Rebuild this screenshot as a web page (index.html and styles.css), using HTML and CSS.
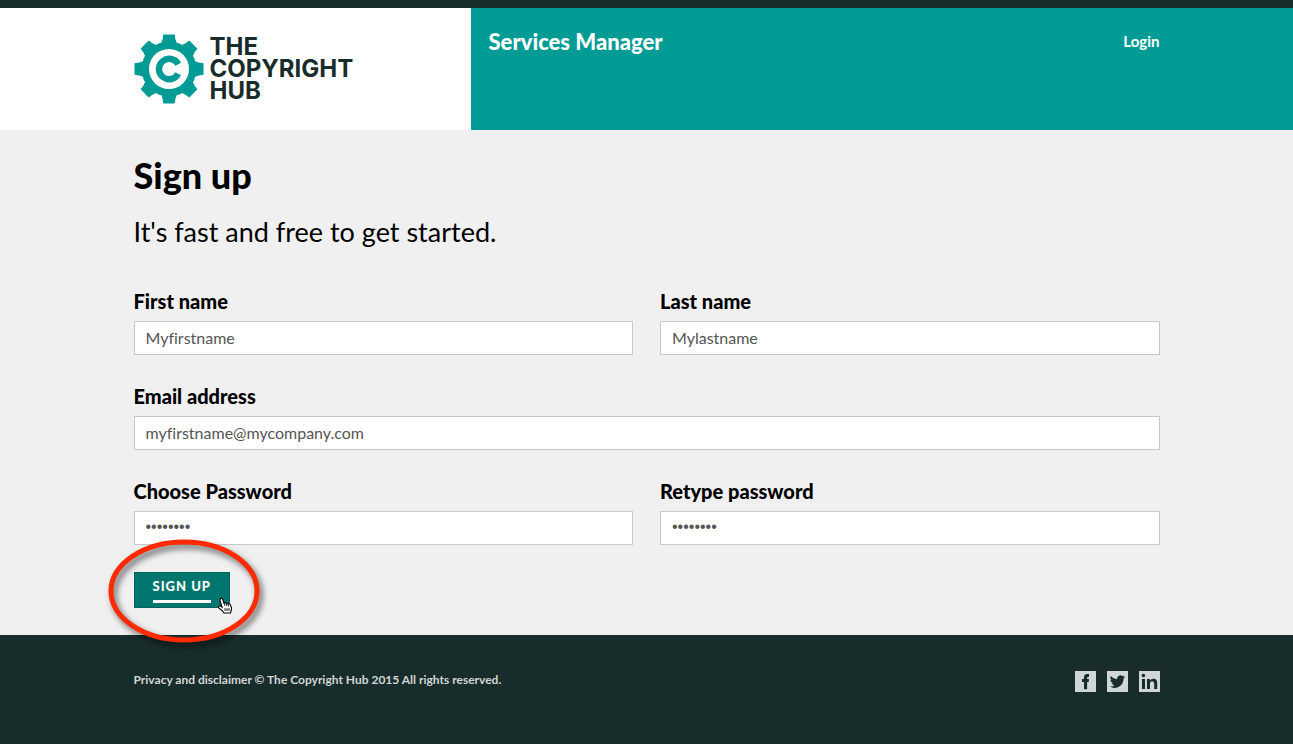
FILE: index.html
```html
<!DOCTYPE html>
<html lang="en">
<head>
<meta charset="utf-8">
<meta name="viewport" content="width=device-width, initial-scale=1">
<title>Sign up - The Copyright Hub</title>
<link rel="stylesheet" href="styles.css">
</head>
<body>
<header class="header">
  <a class="brand" href="#">
    <svg class="brand-mark" viewBox="-35 -35 70 70" aria-hidden="true">
      <defs><path id="tooth" d="M-8-23L-7.2-28Q-6.2-29-6-33.5Q-5.8-34.5-5-34.5H5Q5.8-34.5 6-33.5Q6.2-29 7.2-28L8-23Z"/></defs>
      <g fill="#009b95">
        <circle r="27.5"/>
        <use href="#tooth"/>
        <use href="#tooth" transform="rotate(45)"/>
        <use href="#tooth" transform="rotate(90)"/>
        <use href="#tooth" transform="rotate(135)"/>
        <use href="#tooth" transform="rotate(180)"/>
        <use href="#tooth" transform="rotate(225)"/>
        <use href="#tooth" transform="rotate(270)"/>
        <use href="#tooth" transform="rotate(315)"/>
      </g>
      <circle r="20" fill="#fff"/>
      <path d="M9.2-4.8A10.2 10.2 0 1 0 9.2 4.8" fill="none" stroke="#009b95" stroke-width="6.4"/>
    </svg>
    <span class="brand-name">THE<br>COPYRIGHT<br>HUB</span>
  </a>
  <div class="masthead">
    <span class="service">Services Manager</span>
    <a class="login" href="#">Login</a>
  </div>
</header>
<main class="main">
  <h1 class="title">Sign up</h1>
  <p class="lead">It's fast and free to get started.</p>
  <form class="form">
    <div class="field">
      <label class="label" for="first">First name</label>
      <input class="input" id="first" type="text" value="Myfirstname">
    </div>
    <div class="field">
      <label class="label" for="last">Last name</label>
      <input class="input" id="last" type="text" value="Mylastname">
    </div>
    <div class="field field-wide">
      <label class="label" for="email">Email address</label>
      <input class="input" id="email" type="email" value="myfirstname@mycompany.com">
    </div>
    <div class="field">
      <label class="label" for="pass">Choose Password</label>
      <input class="input password" id="pass" type="password" value="password">
    </div>
    <div class="field">
      <label class="label" for="pass2">Retype password</label>
      <input class="input password" id="pass2" type="password" value="password">
    </div>
  </form>
  <div class="action">
    <button class="button" type="button"><span class="button-text">SIGN UP</span></button>
    <svg class="highlight" viewBox="0 0 170 120" aria-hidden="true">
      <ellipse cx="85" cy="60" rx="73" ry="49" fill="none" stroke="#ff2a00" stroke-width="5"/>
    </svg>
    <svg class="pointer" viewBox="0 0 16 17" aria-hidden="true">
      <path d="M3.500 1.500Q4.500 .500 5.500 2L7 6Q8 5 9 6.200Q10 5.600 11 6.900Q12.500 6.300 13.300 7.800L14.500 11Q14.800 12.500 13.500 16H7Q5.500 13.500 2.200 11.300Q.800 9.800 2 9Q3.300 8.700 5 10L3 3.500Q2.700 2.300 3.500 1.500Z" fill="#fff" stroke="#000" stroke-width="1.100"/>
      <path d="M7 6L7.800 8.800M9 6.400L9.800 9M11 7L11.600 9.400M8 11.200V14M10 11.200V14M12 11V14" fill="none" stroke="#000" stroke-width=".900"/>
    </svg>
  </div>
</main>
<footer class="footer">
  <small class="legal">Privacy and disclaimer © The Copyright Hub 2015 All rights reserved.</small>
  <nav class="social" aria-label="Social">
    <a class="social-link" href="#" aria-label="Facebook"><svg class="social-icon" viewBox="0 0 21 21"><path d="M9 18.200V10.900H7V8H9V6.300Q9 3 12.200 3H14V5.900H12.900Q12.100 5.900 12.100 6.800V8H14L13.700 10.900H12.100V18.200Z"/></svg></a>
    <a class="social-link" href="#" aria-label="Twitter"><svg class="social-icon" viewBox="0 0 21 21"><path d="M18 5.700Q17.300 6.100 16.300 6.300Q17.300 5.600 17.700 4.500Q16.700 5.100 15.600 5.300A3.300 3.300 0 0 0 10.100 8.300Q6.200 8.100 3.700 5Q2.500 7.500 4.700 9.200Q4 9.200 3.300 8.800Q3.400 11.200 5.900 12.100Q5.200 12.300 4.500 12.100Q5.200 14.100 7.500 14.300Q5.500 15.800 3 15.600Q5 16.900 7.500 16.900C13.500 16.900 16.700 12 16.500 7.500Q17.400 6.800 18 5.700Z"/></svg></a>
    <a class="social-link" href="#" aria-label="LinkedIn"><svg class="social-icon" viewBox="0 0 21 21"><circle cx="4.400" cy="4.500" r="1.800"/><path d="M3 8H6V18H3ZM8 8H10.900V9.400Q12 7.700 14.200 7.700C17.500 7.700 18.200 9.800 18.200 12.300V18H15.200V13Q15.200 10.300 13.200 10.300Q11 10.300 11 13V18H8Z"/></svg></a>
  </nav>
</footer>
</body>
</html>
```
FILE: styles.css
```css
:root {
  --gutter: max(24px, calc(50vw - 513px));
  --dark: #182d2b;
  --teal: #009b95;
}

* {
  box-sizing: border-box;
}

body {
  display: flex;
  flex-direction: column;
  min-height: 100vh;
  margin: 0;
  background: #f0f0f0;
  color: #000;
  font-family: Lato, "Noto Sans", sans-serif;
  font-variant-ligatures: none;
}

.header {
  display: grid;
  grid-template-columns: calc(50% - 176px) 1fr;
  min-height: 130px;
  border-top: 8px solid var(--dark);
}

.brand {
  display: flex;
  align-items: center;
  gap: 6px;
  padding-left: var(--gutter);
  background: #fff;
  color: var(--dark);
  text-decoration: none;
}

.brand-mark {
  width: 70px;
  height: 70px;
}

.brand-name {
  font-family: Inter, sans-serif;
  font-size: 24px;
  font-weight: 700;
  line-height: 22px;
}

.masthead {
  display: flex;
  justify-content: space-between;
  align-items: flex-start;
  padding: 20px var(--gutter) 20px 18px;
  background: var(--teal);
  color: #fff;
}

.service {
  font-size: 22px;
  font-weight: 900;
  line-height: 28px;
}

.login {
  color: #fff;
  font-size: 15px;
  font-weight: 700;
  line-height: 26px;
  text-decoration: none;
}

.main {
  padding: 24px var(--gutter) 27px;
}

.title {
  margin: 0;
  font-size: 36px;
  font-weight: 900;
  line-height: 42px;
}

.lead {
  margin: 17px 0 39px;
  font-size: 27px;
  line-height: 38px;
}

.form {
  display: grid;
  grid-template-columns: 1fr 1fr;
  gap: 30px 27px;
}

.field {
  display: flex;
  flex-direction: column;
  gap: 8px;
}

.field-wide {
  grid-column: 1 / -1;
}

.label {
  font-size: 20px;
  font-weight: 900;
  line-height: 23px;
}

.input {
  width: 100%;
  height: 34px;
  padding: 0 11px 2px;
  border: 1px solid #c8c8c8;
  border-radius: 0;
  background: #fff;
  color: #555;
  font: 16px Lato, "Noto Sans", sans-serif;
  font-variant-ligatures: none;
}

.password {
  font-family: "Liberation Sans", sans-serif;
}

.action {
  position: relative;
  width: max-content;
  margin-top: 27px;
}

.button {
  display: block;
  height: 36px;
  padding: 0 18px;
  border: 1px solid #00625d;
  background: #00766f;
  color: #fff;
  font: 900 13px Lato, "Noto Sans", sans-serif;
  letter-spacing: 1px;
}

.button-text {
  display: block;
  padding-bottom: 5px;
  border-bottom: 3px solid #fff;
  line-height: 18px;
}

.highlight {
  position: absolute;
  left: -35px;
  top: -41px;
  width: 170px;
  height: 120px;
  filter: drop-shadow(3px 4px 3px rgba(0, 0, 0, 0.6));
  pointer-events: none;
}

.pointer {
  position: absolute;
  left: 83px;
  top: 25px;
  width: 16px;
  height: 17px;
  pointer-events: none;
}

.footer {
  display: flex;
  flex: 1;
  justify-content: space-between;
  align-items: flex-start;
  padding: 36px var(--gutter);
  background: var(--dark);
  color: #d0d6d5;
}

.legal {
  font-size: 12px;
  font-weight: 700;
  line-height: 17px;
}

.social {
  display: flex;
  gap: 11px;
}

.social-link {
  display: block;
  width: 21px;
  height: 21px;
  background: #d0d6d5;
}

.social-icon {
  display: block;
  fill: var(--dark);
}
```
